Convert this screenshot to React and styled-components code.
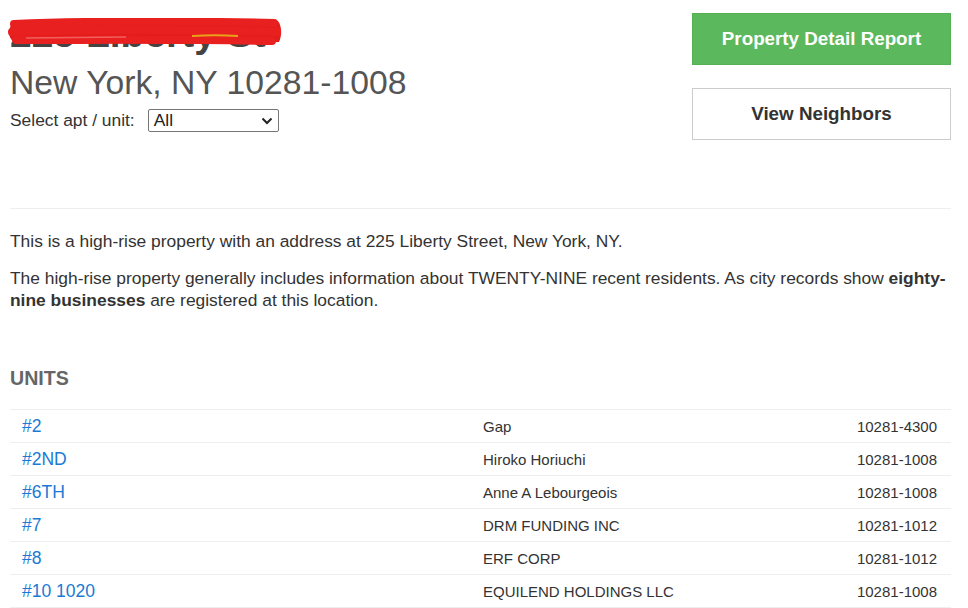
import React from "react"
import styled, { createGlobalStyle } from "styled-components"

const GlobalStyle = createGlobalStyle`
  body {
    margin: 0;
    background: #fff;
    font-family: "Liberation Sans", Arial, sans-serif;
    color: #333;
  }
`

const Page = styled.div`
  width: 941px;
  padding: 0 17px 0 10px;
`

const Header = styled.header`
  display: flex;
  justify-content: space-between;
  align-items: flex-start;
  height: 208px;
  border-bottom: 1px solid #eee;
`

const AddressBlock = styled.div`
  padding-top: 11px;
`

const TitleWrap = styled.div`
  position: relative;
  display: inline-block;
`

const Title = styled.h1`
  margin: 0;
  font-size: 39px;
  line-height: 46px;
  font-weight: 700;
  color: #444;
`

const Scribble = styled.svg`
  position: absolute;
  left: -4px;
  top: 7px;
`

const City = styled.h2`
  margin: 5px 0 0;
  font-size: 33.7px;
  line-height: 40px;
  font-weight: 400;
  color: #555;
`

const UnitPicker = styled.label`
  display: flex;
  align-items: center;
  gap: 13px;
  margin-top: 7px;
  font-size: 17.4px;
  color: #333;
`

const Select = styled.div`
  display: flex;
  align-items: center;
  justify-content: space-between;
  box-sizing: border-box;
  width: 131px;
  height: 23px;
  padding: 0 5px 0 5px;
  border: 1px solid #767676;
  border-radius: 2px;
  font-size: 17.4px;
  color: #222;
`

const Actions = styled.div`
  display: flex;
  flex-direction: column;
  gap: 23px;
  padding-top: 13px;
  width: 259px;
`

const Button = styled.a`
  display: flex;
  align-items: center;
  justify-content: center;
  box-sizing: border-box;
  height: 52px;
  font-size: 18.8px;
  font-weight: 700;
  text-decoration: none;
  color: ${(p) => (p.$primary ? "#fff" : "#333")};
  background: ${(p) => (p.$primary ? "#5cb85c" : "#fff")};
  border: 1px solid ${(p) => (p.$primary ? "#54b054" : "#ccc")};
`

const Description = styled.section`
  padding-top: 21px;
  font-size: 17.4px;
  line-height: 22px;
  color: #333;

  > p {
    margin: 0 0 15px;
  }
`

const SectionTitle = styled.h3`
  margin: 55px 0 0;
  font-size: 19.6px;
  line-height: 24px;
  font-weight: 700;
  color: #666;
`

const UnitTable = styled.div`
  margin-top: 19px;
  border-top: 1px solid #eee;
`

const UnitRow = styled.div`
  display: grid;
  grid-template-columns: 461px 1fr auto;
  align-items: center;
  height: 32px;
  padding: 0 14px 0 12px;
  border-bottom: 1px solid #eee;
`

const UnitLink = styled.a`
  font-size: 17.5px;
  color: #1a7ad4;
  text-decoration: none;
`

const Cell = styled.span`
  font-size: 15px;
  color: #333;
`

const units = [
  { unit: "#2", name: "Gap", zip: "10281-4300" },
  { unit: "#2ND", name: "Hiroko Horiuchi", zip: "10281-1008" },
  { unit: "#6TH", name: "Anne A Lebourgeois", zip: "10281-1008" },
  { unit: "#7", name: "DRM FUNDING INC", zip: "10281-1012" },
  { unit: "#8", name: "ERF CORP", zip: "10281-1012" },
  { unit: "#10 1020", name: "EQUILEND HOLDINGS LLC", zip: "10281-1008" },
]

const App = () => {
  return (
    <Page>
      <GlobalStyle />
      <Header>
        <AddressBlock>
          <TitleWrap>
            <Title>225 Liberty St</Title>
            {/* red marker scribble that hides the street in the screenshot */}
            <Scribble width="276" height="30" viewBox="0 0 276 30">
              <path
                d="M5 8 C40 2 150 1 272 3 C276 8 276 18 273 24 C230 27 150 26 90 25 C50 25 20 26 8 24 C2 20 2 12 5 8 Z"
                fill="#e41c1c"
              />
              <path
                d="M8 6 C80 3 180 3 268 5 M6 14 C90 11 180 11 271 14 M10 22 C90 22 180 21 266 23"
                stroke="#e8201f"
                strokeWidth="8"
                strokeLinecap="round"
                fill="none"
              />
              <path d="M186 18 C200 17 218 17 232 18" stroke="#e9a21a" strokeWidth="2" fill="none" />
              <path d="M20 20 L120 19" stroke="#f06060" strokeWidth="1.5" fill="none" />
            </Scribble>
          </TitleWrap>
          <City>New York, NY 10281-1008</City>
          <UnitPicker>
            Select apt / unit:
            <Select>
              All
              <svg width="12" height="8" viewBox="0 0 12 8">
                <path d="M1.5 1.5 L6 6 L10.5 1.5" stroke="#222" strokeWidth="2" fill="none" />
              </svg>
            </Select>
          </UnitPicker>
        </AddressBlock>
        <Actions>
          <Button $primary href="#">Property Detail Report</Button>
          <Button href="#">View Neighbors</Button>
        </Actions>
      </Header>
      <Description>
        <p>This is a high-rise property with an address at 225 Liberty Street, New York, NY.</p>
        <p>
          The high-rise property generally includes information about TWENTY-NINE recent
          residents. As city records show <b>eighty-nine businesses</b> are registered at this
          location.
        </p>
      </Description>
      <SectionTitle>UNITS</SectionTitle>
      <UnitTable>
        {units.map((u, index) => (
          <UnitRow key={index}>
            <UnitLink href="#">{u.unit}</UnitLink>
            <Cell>{u.name}</Cell>
            <Cell>{u.zip}</Cell>
          </UnitRow>
        ))}
      </UnitTable>
    </Page>
  )
}

export default App
